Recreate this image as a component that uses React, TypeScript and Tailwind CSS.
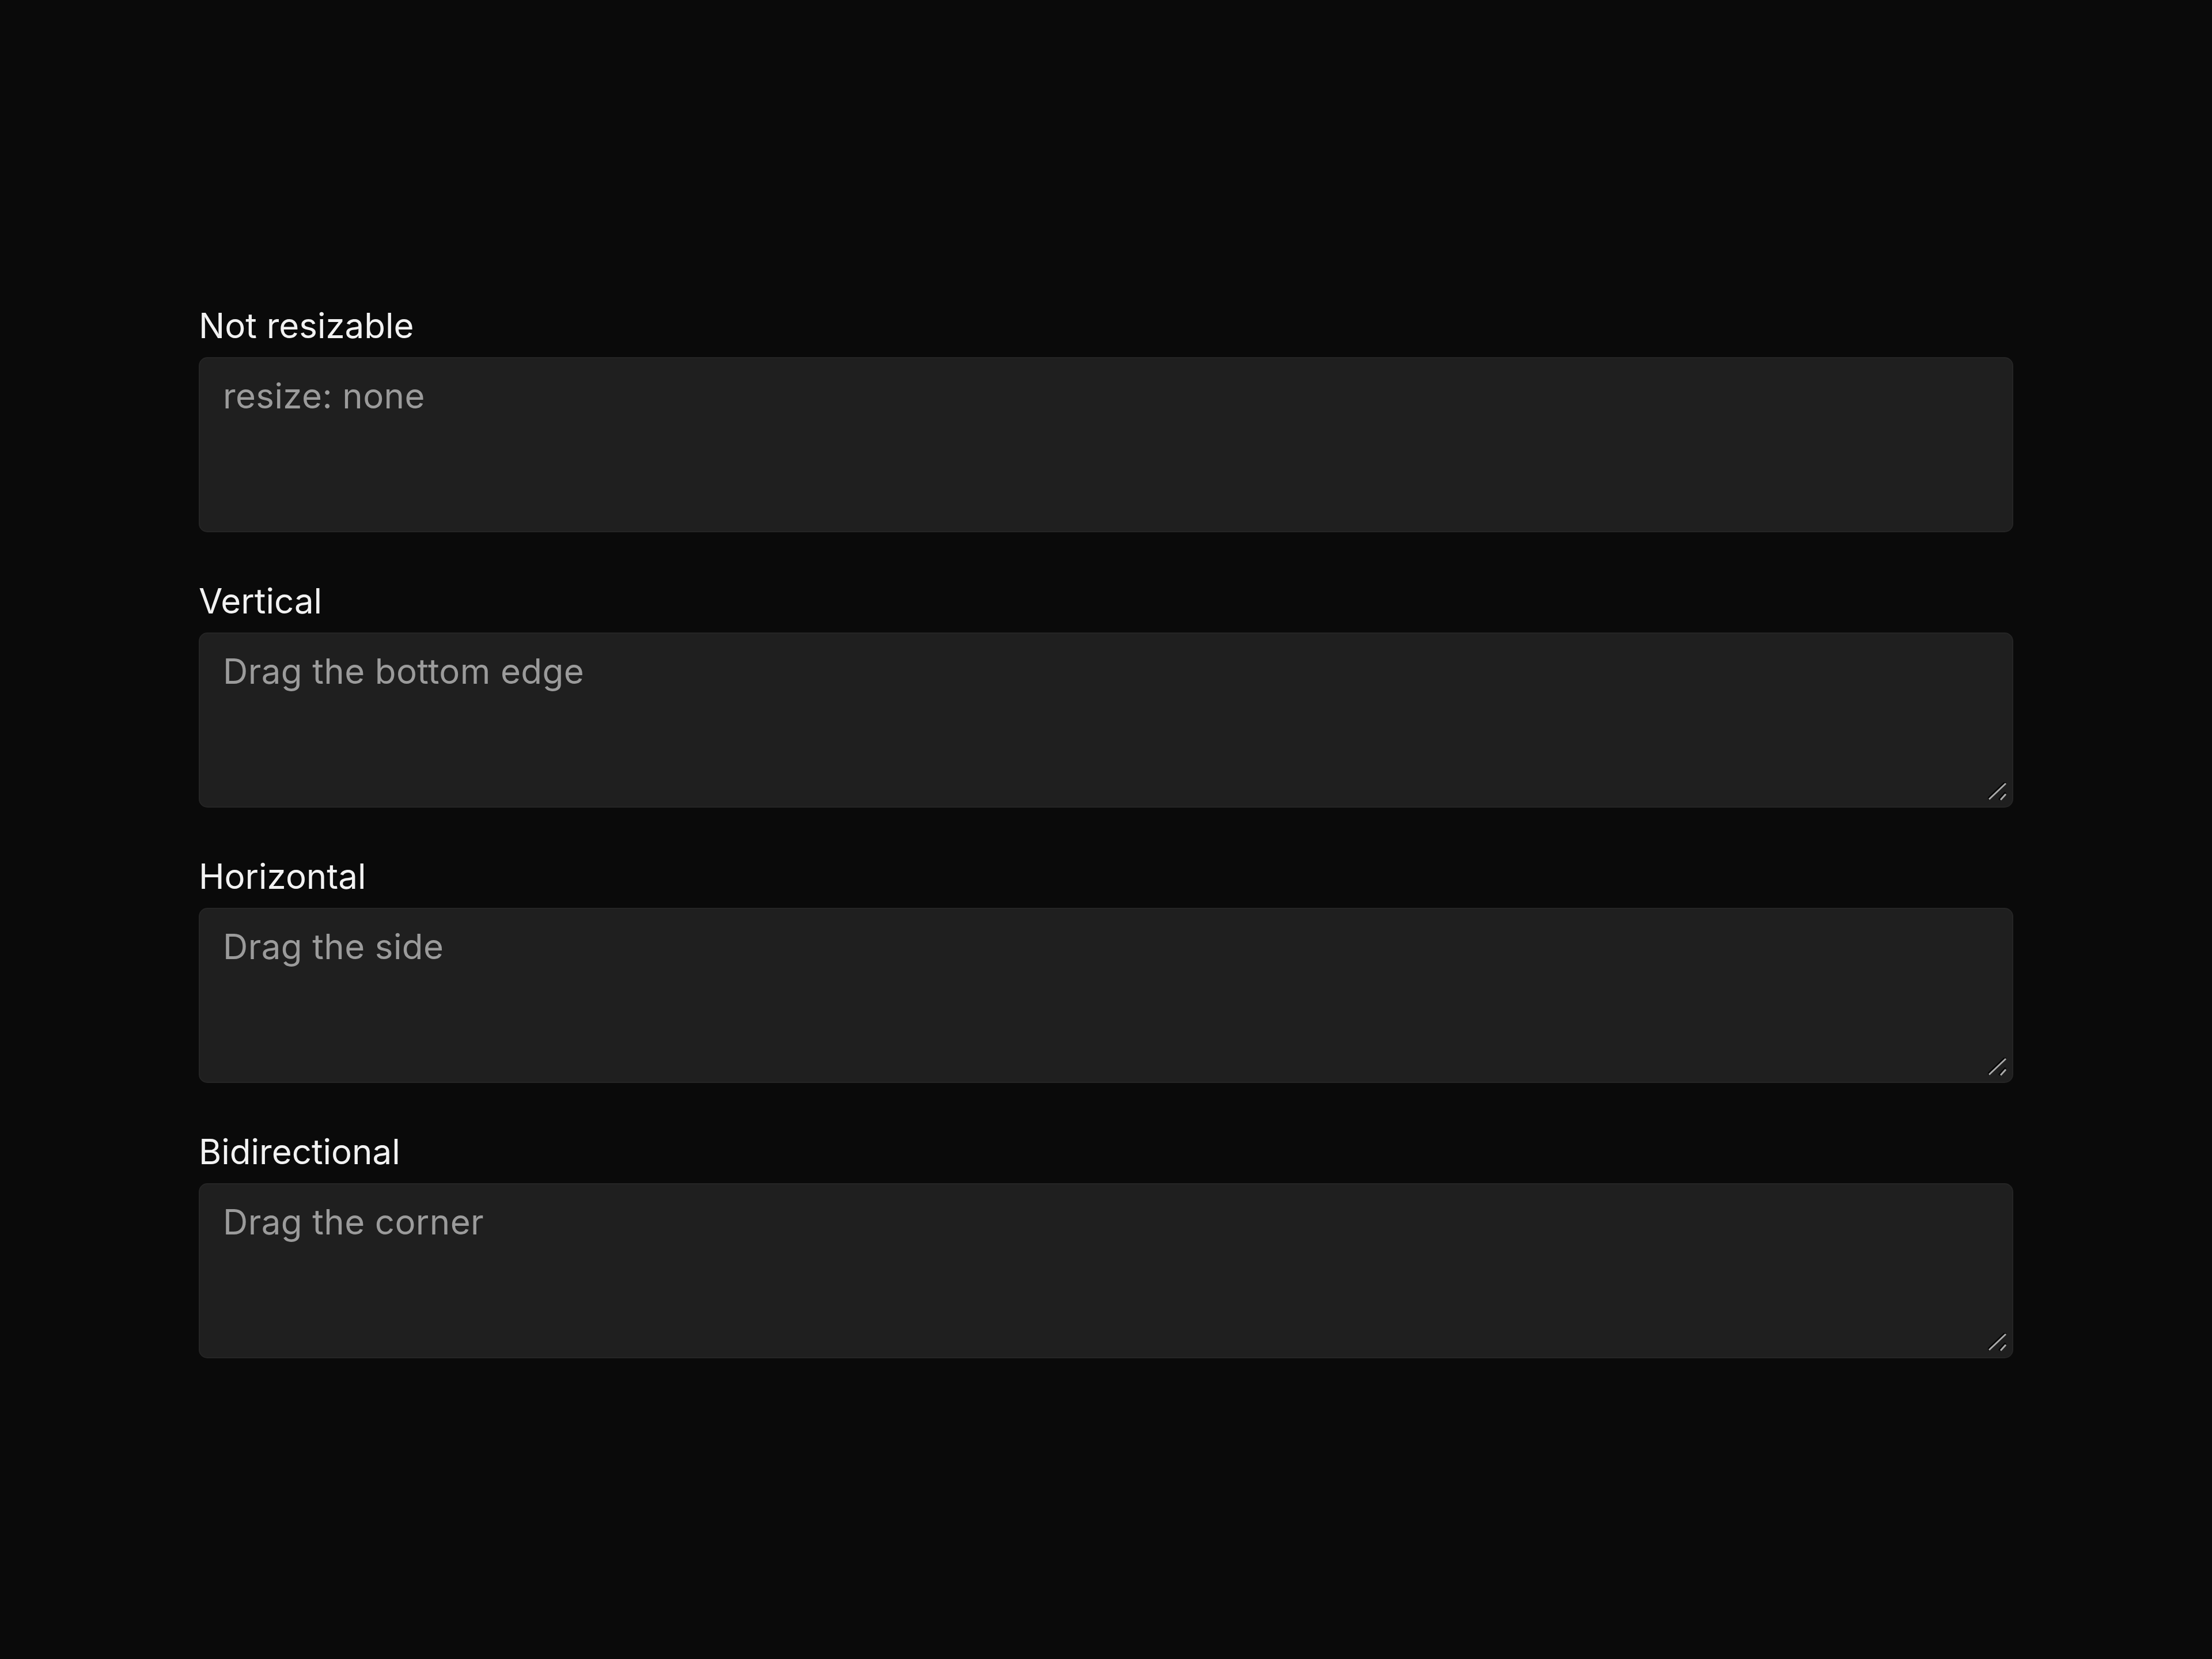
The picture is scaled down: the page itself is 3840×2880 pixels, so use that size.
const fields = [
  { label: "Not resizable", placeholder: "resize: none", handle: false },
  { label: "Vertical", placeholder: "Drag the bottom edge", handle: true },
  { label: "Horizontal", placeholder: "Drag the side", handle: true },
  { label: "Bidirectional", placeholder: "Drag the corner", handle: true },
];

function ResizeGrip() {
  return (
    <svg
      className="pointer-events-none absolute right-[12px] bottom-[12px]"
      width="32"
      height="32"
      viewBox="0 0 32 32"
      fill="none"
    >
      <g stroke="#050505" strokeWidth="3.5" strokeLinecap="square">
        <line x1="0.5" y1="28" x2="29.5" y2="0.5" />
        <line x1="20.5" y1="29" x2="29.5" y2="19" />
      </g>
      <g stroke="#ababab" strokeWidth="3" strokeLinecap="butt">
        <line x1="2" y1="29.5" x2="31" y2="2" />
        <line x1="22" y1="30.5" x2="31" y2="20.5" />
      </g>
    </svg>
  );
}

export default function App() {
  return (
    <div className="min-h-screen bg-[#0a0a0a] pt-[520px] font-['Inter','Liberation_Sans',sans-serif]">
      <div className="mx-auto flex w-[3150px] flex-col gap-[74px]">
        {fields.map((f) => (
          <div key={f.label} className="flex flex-col gap-[10px]">
            <label className="text-[60px] leading-[90px] text-[#f2f2f2]">
              {f.label}
            </label>
            <div className="relative">
              <textarea
                placeholder={f.placeholder}
                className="block h-[304px] w-full resize-none rounded-[15px] border-2 border-[#252525] bg-[#1f1f1f] px-[40px] py-[20px] text-[60px] leading-[90px] tracking-[0.4px] text-[#f2f2f2] outline-none placeholder:text-[#9b9b9b]"
              />
              {f.handle && <ResizeGrip />}
            </div>
          </div>
        ))}
      </div>
    </div>
  );
}
